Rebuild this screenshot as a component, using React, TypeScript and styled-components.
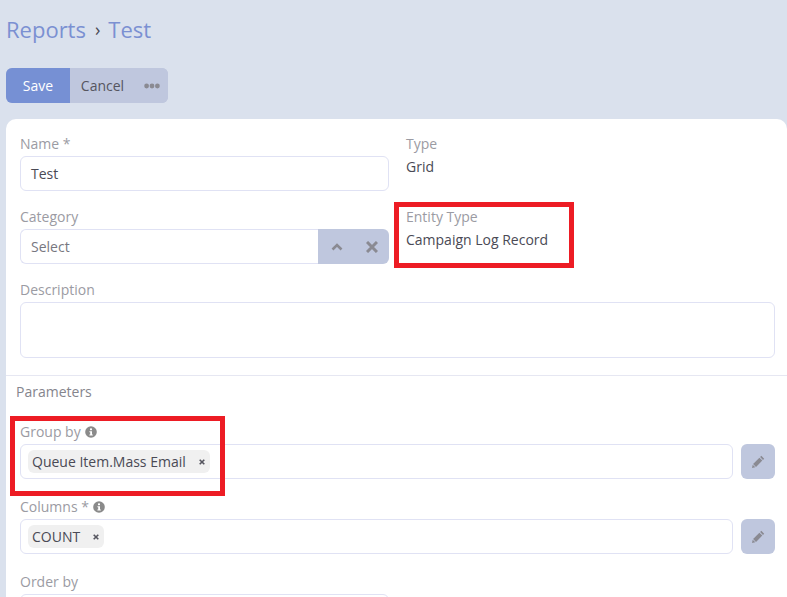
import styled, { createGlobalStyle } from "styled-components";

const GlobalStyle = createGlobalStyle`
  html, body {
    margin: 0;
    height: 100%;
    overflow: hidden;
    background: #dae1ed;
    font-family: "Open Sans", "Liberation Sans", sans-serif;
    font-size: 14px;
    color: #4a4a55;
  }
`;

const Page = styled.div`
  position: relative;
  height: 597px;
  overflow: hidden;
  padding-left: 6px;
`;

const Breadcrumb = styled.div`
  display: flex;
  align-items: center;
  height: 30px;
  padding-top: 14px;
  margin-bottom: 24px;
  font-size: 22px;
  line-height: 30px;
  color: #7b90d2;
`;

const CrumbSeparator = styled.span`
  margin: 0 8px 0 9px;
  font-size: 18px;
  color: #4a4a55;
`;

const Toolbar = styled.div`
  display: flex;
  width: 162px;
  height: 35px;
  margin-bottom: 16px;
  border-radius: 6px;
  overflow: hidden;
  background: #bfc7de;
`;

const ToolbarButton = styled.div<{ $primary?: boolean; $width: number }>`
  display: flex;
  align-items: center;
  justify-content: center;
  width: ${(p) => p.$width}px;
  background: ${(p) => (p.$primary ? "#7690d4" : "#bfc7de")};
  color: ${(p) => (p.$primary ? "#ffffff" : "#55555f")};
`;

const Panel = styled.div`
  height: 500px;
  padding-top: 15px;
  box-sizing: border-box;
  background: #ffffff;
  border-radius: 10px 10px 0 0;
`;

const FormGrid = styled.div`
  display: grid;
  grid-template-columns: 369px 369px;
  column-gap: 17px;
  padding: 0 14px;
`;

const Field = styled.div<{ $wide?: boolean }>`
  grid-column: ${(p) => (p.$wide ? "1 / -1" : "auto")};
  margin-bottom: 16px;
`;

const Label = styled.div`
  display: flex;
  align-items: center;
  gap: 4px;
  height: 20px;
  line-height: 20px;
  margin-bottom: 2px;
  color: #9b9ba3;
`;

const Value = styled.div`
  height: 22px;
  line-height: 22px;
  color: #4a4a55;
`;

const Input = styled.div`
  display: flex;
  align-items: center;
  height: 35px;
  box-sizing: border-box;
  padding: 0 10px;
  background: #ffffff;
  border: 1px solid #e0e2f4;
  border-radius: 6px;
`;

const Placeholder = styled.span`
  color: #77777f;
`;

const TextArea = styled(Input)`
  height: 56px;
  width: 755px;
`;

const SelectBox = styled.div`
  display: flex;
  height: 35px;
`;

const SelectInput = styled(Input)`
  flex: 1;
  border-right: none;
  border-radius: 6px 0 0 6px;
`;

const SelectAddon = styled.div`
  display: flex;
  align-items: center;
  justify-content: space-between;
  width: 71px;
  padding: 0 11px 0 13px;
  box-sizing: border-box;
  background: #bfc7de;
  border-radius: 0 6px 6px 0;
  color: #8a8a92;
`;

const Divider = styled.div`
  height: 1px;
  margin-top: 1px;
  background: #e6e7f2;
`;

const SectionTitle = styled.div`
  height: 20px;
  line-height: 20px;
  margin: 6px 0 20px 10px;
  color: #85858d;
`;

const ParamList = styled.div`
  display: flex;
  flex-direction: column;
  gap: 18px;
  padding: 0 12px 0 14px;
`;

const ParamRow = styled.div`
  display: flex;
  gap: 8px;
`;

const TagInput = styled(Input)`
  flex: 1;
  padding: 0 7px;
`;

const ShortInput = styled(Input)`
  width: 369px;
`;

const Tag = styled.span`
  display: inline-flex;
  align-items: center;
  height: 23px;
  padding: 0 5px 0 4px;
  background: #f0f0f0;
  border-radius: 6px;
  color: #4a4a55;
`;

const TagClose = styled.svg`
  margin-left: 13px;
  color: #55555f;
`;

const EditButton = styled.div`
  display: flex;
  align-items: center;
  justify-content: center;
  width: 34px;
  height: 35px;
  background: #bfc7de;
  border-radius: 6px;
  color: #8a8a92;
`;

const Highlight = styled.div<{ $x: number; $y: number; $w: number; $h: number }>`
  position: absolute;
  left: ${(p) => p.$x}px;
  top: ${(p) => p.$y}px;
  width: ${(p) => p.$w}px;
  height: ${(p) => p.$h}px;
  box-sizing: border-box;
  border: 5px solid #ed1c24;
`;

const Dots = () => (
  <svg width="16" height="6" viewBox="0 0 16 6" fill="#8a8a92">
    <circle cx="2.6" cy="3" r="2.4" />
    <circle cx="8" cy="3" r="2.4" />
    <circle cx="13.4" cy="3" r="2.4" />
  </svg>
);

const ChevronUp = () => (
  <svg width="12" height="8" viewBox="0 0 12 8" fill="none" stroke="currentColor" strokeWidth="2.6">
    <path d="M1.5 6.5 6 2l4.500 4.500" />
  </svg>
);

const Cross = () => (
  <svg width="12" height="12" viewBox="0 0 12 12" fill="none" stroke="currentColor" strokeWidth="3">
    <path d="M1 1l10 10M11 1 1 11" />
  </svg>
);

const Info = () => (
  <svg width="12" height="12" viewBox="0 0 12 12">
    <circle cx="6" cy="6" r="5.800" fill="#8a8a8a" />
    <rect x="5" y="2.400" width="2" height="1.800" fill="#fff" />
    <path d="M4.400 5.200H7v3.400h.8v1H4.400v-1h.8V6.200h-.8z" fill="#fff" />
  </svg>
);

const Pencil = () => (
  <svg width="13" height="13" viewBox="0 0 13 13" fill="currentColor">
    <path d="M9.300 0.800 12.200 3.700 11 4.900 8.100 2z" />
    <path d="M7.400 2.700 10.300 5.600 4 11.900 1.100 9z" />
    <path d="M0.700 9.700 3.300 12.300 0 13z" />
  </svg>
);

const TagX = () => (
  <TagClose width="6" height="6" viewBox="0 0 6 6" fill="none" stroke="currentColor" strokeWidth="1.600">
    <path d="M.7.700l4.600 4.600M5.300.700.700 5.300" />
  </TagClose>
);

const App = () => {
  return (
    <Page>
      <GlobalStyle />
      <Breadcrumb>
        <span>Reports</span>
        <CrumbSeparator>›</CrumbSeparator>
        <span>Test</span>
      </Breadcrumb>
      <Toolbar>
        <ToolbarButton $primary $width={64}>Save</ToolbarButton>
        <ToolbarButton $width={65}>Cancel</ToolbarButton>
        <ToolbarButton $width={33}><Dots /></ToolbarButton>
      </Toolbar>
      <Panel>
        <FormGrid>
          <Field>
            <Label>Name *</Label>
            <Input>Test</Input>
          </Field>
          <Field>
            <Label>Type</Label>
            <Value>Grid</Value>
          </Field>
          <Field>
            <Label>Category</Label>
            <SelectBox>
              <SelectInput><Placeholder>Select</Placeholder></SelectInput>
              <SelectAddon><ChevronUp /><Cross /></SelectAddon>
            </SelectBox>
          </Field>
          <Field>
            <Label>Entity Type</Label>
            <Value>Campaign Log Record</Value>
          </Field>
          <Field $wide>
            <Label>Description</Label>
            <TextArea />
          </Field>
        </FormGrid>
        <Divider />
        <SectionTitle>Parameters</SectionTitle>
        <ParamList>
          <div>
            <Label>Group by <Info /></Label>
            <ParamRow>
              <TagInput><Tag>Queue Item.Mass Email<TagX /></Tag></TagInput>
              <EditButton><Pencil /></EditButton>
            </ParamRow>
          </div>
          <div>
            <Label>Columns * <Info /></Label>
            <ParamRow>
              <TagInput><Tag>COUNT<TagX /></Tag></TagInput>
              <EditButton><Pencil /></EditButton>
            </ParamRow>
          </div>
          <div>
            <Label>Order by</Label>
            <ShortInput />
          </div>
        </ParamList>
      </Panel>
      <Highlight $x={394} $y={202} $w={180} $h={66} />
      <Highlight $x={10} $y={416} $w={215} $h={80} />
    </Page>
  );
};

export default App;
